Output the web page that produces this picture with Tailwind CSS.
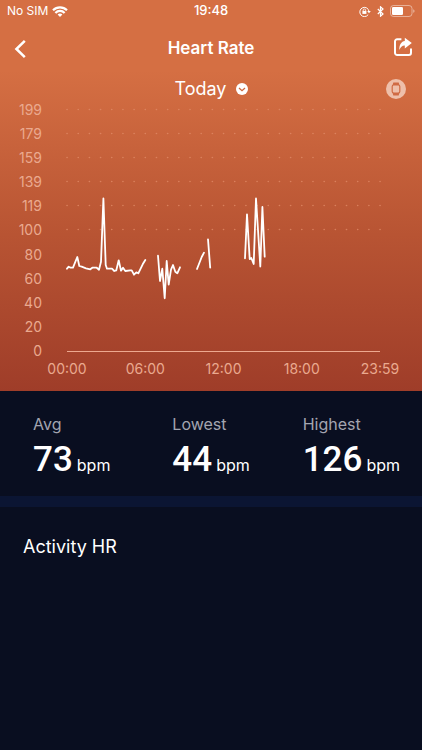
<!DOCTYPE html>
<html lang="en">
<head>
<meta charset="utf-8">
<meta name="viewport" content="width=device-width, initial-scale=1">
<title>Heart Rate</title>
<script src="https://cdn.jsdelivr.net/npm/@tailwindcss/browser@4"></script>
</head>
<body class="flex min-h-screen flex-col bg-[#090e20] font-['Inter','Liberation_Sans',sans-serif] text-white">
  <div class="bg-linear-to-b from-[#d56f43] from-18% via-[#b85433] via-60% to-[#9f3d29] pb-3">
    <div class="grid h-[22px] grid-cols-3 items-center px-[7px] text-xs">
      <div class="flex items-center gap-1">
        <span>No SIM</span>
        <svg class="h-[11px] w-4" viewBox="0 0 16 11" fill="none" stroke="currentColor" stroke-width="2.2" aria-hidden="true">
          <path d="M1 4.2a10 10 0 0 1 14 0"/><path d="M3.4 6.9a6.3 6.3 0 0 1 9.2 0"/>
          <path d="M8 11 5.6 8.6a3.4 3.4 0 0 1 4.8 0z" fill="currentColor" stroke="none"/>
        </svg>
      </div>
      <span class="text-center text-[13px] font-medium">19:48</span>
      <div class="flex items-center justify-end gap-[6px]">
        <svg class="h-[11px] w-3" viewBox="0 0 12 11" fill="none" stroke="currentColor" aria-hidden="true">
          <path d="M9.2 8.6A4.6 4.6 0 1 1 10 5.5"/><path d="M8.2 5h3.6L10 7.3z" fill="currentColor" stroke="none"/>
          <rect x="3.4" y="4.9" width="4" height="3" fill="currentColor" stroke="none"/><path d="M4.2 5V4.2a1.2 1.2 0 0 1 2.4 0V5" stroke-width=".8"/>
        </svg>
        <svg class="h-[11px] w-[7px]" viewBox="0 0 7 11" fill="none" stroke="currentColor" stroke-width="1.2" aria-hidden="true">
          <path d="m.8 3 5.2 5-2.5 2.2V.8L6 3 .8 8"/>
        </svg>
        <svg class="h-3 w-[25px]" viewBox="0 0 25 12" fill="none" aria-hidden="true">
          <rect x=".5" y=".5" width="21.5" height="11" rx="3" stroke="#fff" stroke-opacity=".45"/>
          <rect x="2" y="2" width="11" height="8" rx="1.3" fill="#fff"/>
          <path d="M23.3 4.2v3.6c1.6-.5 1.6-3.1 0-3.6z" fill="#fff" fill-opacity=".55"/>
        </svg>
      </div>
    </div>
    <header class="grid h-[53px] grid-cols-[1fr_auto_1fr] items-center px-[9px]">
      <button type="button" aria-label="Back" class="justify-self-start pl-[5px]">
        <svg class="h-5 w-3" viewBox="0 0 12 20" fill="none" stroke="currentColor" stroke-width="2.5"><path d="M10.8 1.8 2.4 10l8.4 8.2"/></svg>
      </button>
      <h1 class="text-[17px] font-semibold">Heart Rate</h1>
      <button type="button" aria-label="Share" class="justify-self-end pb-1">
        <svg class="h-5 w-5" viewBox="0 0 20 20" fill="none">
          <path d="M8.4 2.2H4.2a2.2 2.2 0 0 0-2.2 2.2v11.4A2.2 2.2 0 0 0 4.2 18h11.6a2.2 2.2 0 0 0 2.2-2.2v-4.2" stroke="currentColor" stroke-width="2"/>
          <path d="M11.8.8 18.8 6l-7 5.6V8.4C9.2 8.3 7.6 9.8 6.4 13 6 7.8 8.4 4.4 11.8 4z" fill="currentColor"/>
        </svg>
      </button>
    </header>
    <div class="grid h-[27px] grid-cols-[1fr_auto_1fr] items-center px-4">
      <button type="button" class="col-start-2 flex items-center gap-[9px] text-lg leading-[27px]">
        <span>Today</span>
        <svg class="h-3 w-3" viewBox="0 0 12 12" aria-hidden="true"><circle cx="6" cy="6" r="6" fill="#fff"/><path d="m3 5 3 2.7L9 5" fill="none" stroke="#cc673e" stroke-width="1.3"/></svg>
      </button>
      <button type="button" aria-label="Device" class="justify-self-end">
        <svg class="h-5 w-5" viewBox="0 0 20 20" aria-hidden="true">
          <circle cx="10" cy="10" r="10" fill="#eebfaa"/>
          <path d="M7.3 3.4h5.4l.8 3H6.5zM6.5 13.6h7l-.8 3H7.3z" fill="#cf6b44"/>
          <rect x="6.2" y="6" width="7.6" height="8" rx="1.4" fill="#eebfaa" stroke="#cf6b44" stroke-width="1.2"/>
        </svg>
      </button>
    </div>
    <div class="flex text-sm leading-4 text-[#eaa98f]">
      <div class="flex h-[257px] w-[42px] flex-col justify-between text-right">
        <span>199</span><span>179</span><span>159</span><span>139</span><span>119</span><span>100</span><span>80</span><span>60</span><span>40</span><span>20</span><span>0</span>
      </div>
      <div class="min-w-0 flex-1 pt-2 pr-[42px] pl-[25px]">
        <svg class="h-[242px] w-full overflow-visible" viewBox="67 110 313 242" preserveAspectRatio="none" fill="none" role="img" aria-label="Heart rate through the day">
          <path d="M67 109.5H381M67 133.5H381M67 157.5H381M67 181.5H381M67 205.5H381M67 229.5H381" stroke="#e08a66" stroke-opacity=".8" stroke-width="1.6" stroke-linecap="round" stroke-dasharray="0.1 11.079"/>
          <path d="M67 351.5H380" stroke="#eda88f" stroke-width="1.2"/>
          <g stroke="#fff" stroke-width="1.8" stroke-linejoin="round" stroke-linecap="round">
            <path d="M67 268.7 68.7 266.7 70.7 267.7H73L77.3 257 79.3 266 81.7 266.7 86 268.3 90.3 269.3 92.3 267.7H96.7L99 269.7 101 261.7 103.4 198.5 105.7 265 107 268.7H112L114.3 271 116.3 270.3 118.7 260.3 121 270.7 123 267.7 125.3 271 130.3 270.3H131.7L134 274.7 136.3 272.3 138.3 273.3 142.7 264.3 145.3 260"/>
            <path d="M158 255.7 160 281 162.3 268.7 164.7 298.3 166.7 261 168.7 284.7 171 269.7 173 265 175.3 271.7 177.3 273.3 180 267.3"/>
            <path d="M197 269 201.7 257 204 252.7M208 239.3 210.2 267.7"/>
            <path d="M245 258.3 247 214.3 249.7 259 251.3 258 253.7 264 256 198.5 260.3 266.5 262.4 207 264.7 256.7"/>
          </g>
        </svg>
      </div>
    </div>
    <div class="mr-5 ml-[45px] flex h-5 items-center justify-between text-center text-sm leading-5 text-[#eaa98f]">
      <span class="w-11">00:00</span><span class="w-11">06:00</span><span class="w-11">12:00</span><span class="w-11">18:00</span><span class="w-11">23:59</span>
    </div>
  </div>
  <dl class="grid grid-cols-[140fr_131fr_96fr] border-b-[11px] border-[#0b1533] pt-[21px] pr-[22px] pb-3 pl-[33px]">
    <div>
      <dt class="text-base leading-6 text-[#a3a5b0]">Avg</dt>
      <dd class="flex h-12 items-baseline gap-1"><span class="font-['Roboto'] text-[35px] leading-[48px] font-medium">73</span><span>bpm</span></dd>
    </div>
    <div>
      <dt class="text-base leading-6 text-[#a3a5b0]">Lowest</dt>
      <dd class="flex h-12 items-baseline gap-1"><span class="font-['Roboto'] text-[35px] leading-[48px] font-medium">44</span><span>bpm</span></dd>
    </div>
    <div>
      <dt class="text-base leading-6 text-[#a3a5b0]">Highest</dt>
      <dd class="flex h-12 items-baseline gap-1"><span class="font-['Roboto'] text-[35px] leading-[48px] font-medium">126</span><span>bpm</span></dd>
    </div>
  </dl>
  <section class="px-[23px] pt-[26px]">
    <h2 class="text-lg leading-7">Activity HR</h2>
  </section>
</body>
</html>
